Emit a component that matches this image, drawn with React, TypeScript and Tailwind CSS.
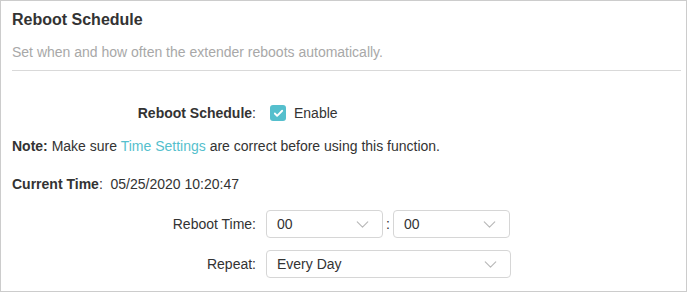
import { ChevronDown, Check } from 'lucide-react';

function Select({ value, width }: { value: string; width: string }) {
  return (
    <div
      className={`flex h-[28px] items-center justify-between rounded-[4px] border border-[#d6d6d6] bg-white pl-[10px] pr-[9px] text-[14px] text-[#333] ${width}`}
    >
      <span>{value}</span>
      <ChevronDown className="h-[21px] w-[21px] text-[#b8b8b8]" strokeWidth={1.3} />
    </div>
  );
}

export default function App() {
  return (
    <div
      className="box-border h-[292px] w-[687px] border border-[#cccccc] bg-white pl-[11px] pr-[5px] pt-[9px] text-[#333]"
      style={{ fontFamily: '"Liberation Sans", Arial, sans-serif' }}
    >
      <h2 className="text-[16px] font-bold leading-[20px] text-[#333]">Reboot Schedule</h2>
      <p className="mt-[12px] text-[14px] leading-[20px] text-[#a8a8a8]">
        Set when and how often the extender reboots automatically.
      </p>
      <div className="mt-[8px] h-px bg-[#d9d9d9]" />

      <div className="mt-[32px] flex h-[20px] items-center text-[14px] leading-[20px]">
        <div className="w-[244px] text-right">
          <span className="font-bold">Reboot Schedule</span>:
        </div>
        <div className="ml-[14px] flex items-center gap-[8px]">
          <span className="flex h-[16px] w-[16px] items-center justify-center rounded-[3px] bg-[#55bfcd]">
            <Check className="h-[11px] w-[11px] text-white" strokeWidth={4} />
          </span>
          <span>Enable</span>
        </div>
      </div>

      <p className="mt-[13px] text-[14px] leading-[20px]">
        <span className="font-bold">Note:</span> Make sure{' '}
        <span className="text-[#55bfcd]">Time Settings</span> are correct before using this function.
      </p>

      <p className="mt-[18px] text-[14px] leading-[20px]">
        <span className="font-bold">Current Time</span>:&nbsp;&nbsp;05/25/2020 10:20:47
      </p>

      <div className="mt-[16px] flex items-center text-[14px]">
        <div className="w-[244px] text-right">Reboot Time:</div>
        <div className="ml-[10px] flex items-center">
          <Select value="00" width="w-[117px]" />
          <span className="mx-[3px] w-[4px] text-center">:</span>
          <Select value="00" width="w-[117px]" />
        </div>
      </div>

      <div className="mt-[12px] flex items-center text-[14px]">
        <div className="w-[244px] text-right">Repeat:</div>
        <div className="ml-[10px]">
          <Select value="Every Day" width="w-[245px]" />
        </div>
      </div>
    </div>
  );
}
